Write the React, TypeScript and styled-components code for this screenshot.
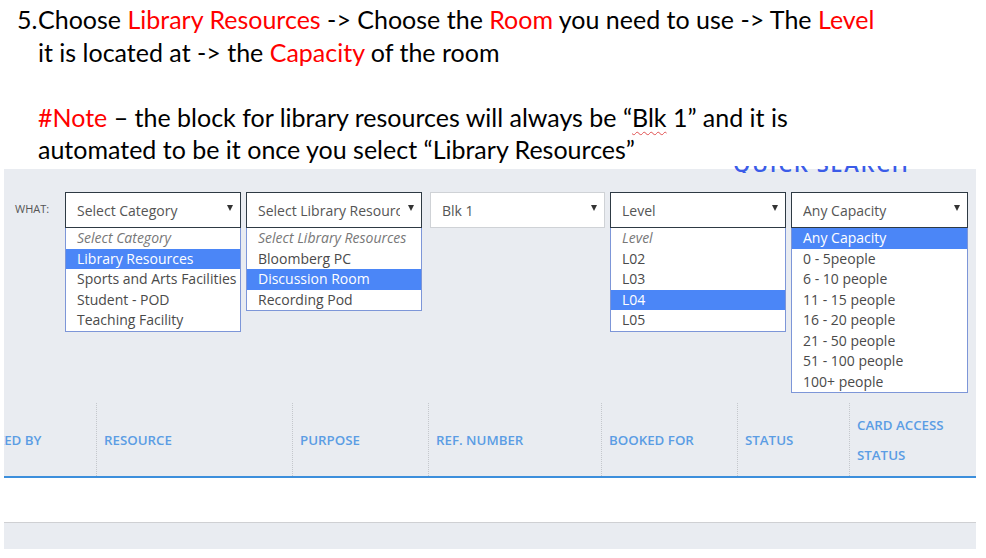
import React from "react";
import styled, { createGlobalStyle } from "styled-components";

const Global = createGlobalStyle`
  html, body { margin: 0; padding: 0; background: #ffffff; }
  body { width: 986px; height: 558px; overflow: hidden; }
`;

const Page = styled.div`
  width: 986px;
  height: 558px;
  background: #fff;
`;

const Instructions = styled.div`
  display: flex;
  height: 166px;
  box-sizing: border-box;
  padding: 3px 0 0 17px;
  font-family: Lato, "Liberation Sans", sans-serif;
  font-size: 25px;
  line-height: 32.5px;
  color: #000;
`;

const Marker = styled.span`
  flex: none;
  width: 21px;
`;

const Body = styled.div`
  white-space: nowrap;
`;

const Para = styled.p`
  margin: 0 0 32.5px;
  &:last-child { margin: 0; }
`;

const Red = styled.span`
  color: #ff0000;
`;

const Squiggle = styled.span`
  text-decoration: underline wavy #e05050;
  text-decoration-thickness: 1px;
  text-underline-offset: 4px;
`;

const Panel = styled.section`
  position: relative;
  margin-left: 4px;
  width: 972px;
  height: 383px;
  background: linear-gradient(to bottom, #ffffff 0 3px, #e9ecf1 3px);
  overflow: hidden;
  font-family: "Open Sans", "Noto Sans", sans-serif;
`;

const TitleClip = styled.div`
  height: 7px;
  overflow: hidden;
  padding-left: 729px;
`;

const Title = styled.h2`
  margin: -14px 0 0;
  font-size: 22px;
  line-height: 22px;
  font-weight: 600;
  letter-spacing: 1.6px;
  color: #3b5ce8;
  white-space: nowrap;
`;

const FilterRow = styled.div`
  display: flex;
  align-items: center;
  padding: 19px 0 0 11px;
`;

const Label = styled.span`
  width: 50px;
  font-size: 11px;
  color: #555;
  margin-top: -3px;
`;

const SelectWrap = styled.div<{ $w: number; $ml: number }>`
  position: relative;
  width: ${(p) => p.$w}px;
  margin-left: ${(p) => p.$ml}px;
`;

const SelectBox = styled.div<{ $active?: boolean }>`
  height: 36px;
  box-sizing: border-box;
  border: ${(p) => (p.$active ? "1.5px solid #2e3a44" : "1px solid #cfd2d6")};
  background: #fff;
  display: flex;
  align-items: center;
  padding: 1px 7px 0 11px;
  gap: 8px;
  font-size: 14px;
  color: #555;
`;

const Value = styled.span`
  flex: 1;
  overflow: hidden;
  white-space: nowrap;
`;

const Arrow = styled.span`
  flex: none;
  width: 0;
  height: 0;
  border-left: 3.5px solid transparent;
  border-right: 3.5px solid transparent;
  border-top: 6px solid #333;
  margin-top: -5px;
`;

const Menu = styled.ul`
  position: absolute;
  top: 100%;
  left: 0;
  right: 0;
  margin: 0;
  padding: 0;
  list-style: none;
  background: #fff;
  border: 1px solid #7d96d8;
  border-top-width: 0;
  z-index: 2;
`;

const Option = styled.li<{ $selected?: boolean; $placeholder?: boolean }>`
  height: 20.5px;
  line-height: 20.5px;
  padding-left: 11px;
  font-size: 14px;
  white-space: nowrap;
  overflow: hidden;
  color: ${(p) => (p.$selected ? "#fff" : p.$placeholder ? "#777" : "#4a4a4a")};
  background: ${(p) => (p.$selected ? "#4b86f7" : "transparent")};
  font-style: ${(p) => (p.$placeholder ? "italic" : "normal")};
`;

const Header = styled.div`
  display: grid;
  grid-template-columns: 92px 196px 136px 173px 136px 112px 1fr;
  height: 73px;
  margin-top: 175px;
  border-bottom: 2px solid #3c8fdc;
`;

const HeadCell = styled.div<{ $first?: boolean }>`
  display: flex;
  align-items: center;
  padding-left: ${(p) => (p.$first ? 0 : 7)}px;
  border-left: ${(p) => (p.$first ? "none" : "1px dotted #c4c7cc")};
  font-size: 13.3px;
  font-weight: 600;
  line-height: 30px;
  color: #5b9de4;
  overflow: hidden;
  white-space: nowrap;
`;

const CutText = styled.span`
  margin-left: -38px;
`;

const Row = styled.div`
  height: 44px;
  background: #fff;
  border-bottom: 1px solid #cfd0d3;
`;

type Sel = {
  w: number;
  ml: number;
  value: string;
  active?: boolean;
  options?: { label: string; selected?: boolean; placeholder?: boolean }[];
};

const selects: Sel[] = [
  {
    w: 176,
    ml: 0,
    value: "Select Category",
    active: true,
    options: [
      { label: "Select Category", placeholder: true },
      { label: "Library Resources", selected: true },
      { label: "Sports and Arts Facilities" },
      { label: "Student - POD" },
      { label: "Teaching Facility" },
    ],
  },
  {
    w: 176,
    ml: 5,
    value: "Select Library Resources",
    active: true,
    options: [
      { label: "Select Library Resources", placeholder: true },
      { label: "Bloomberg PC" },
      { label: "Discussion Room", selected: true },
      { label: "Recording Pod" },
    ],
  },
  { w: 175, ml: 8, value: "Blk 1" },
  {
    w: 176,
    ml: 5,
    value: "Level",
    active: true,
    options: [
      { label: "Level", placeholder: true },
      { label: "L02" },
      { label: "L03" },
      { label: "L04", selected: true },
      { label: "L05" },
    ],
  },
  {
    w: 177,
    ml: 5,
    value: "Any Capacity",
    active: true,
    options: [
      { label: "Any Capacity", selected: true },
      { label: "0 - 5people" },
      { label: "6 - 10 people" },
      { label: "11 - 15 people" },
      { label: "16 - 20 people" },
      { label: "21 - 50 people" },
      { label: "51 - 100 people" },
      { label: "100+ people" },
    ],
  },
];

export default function App() {
  return (
    <Page>
      <Global />
      <Instructions>
        <Marker>5.</Marker>
        <Body>
          <Para>
            Choose <Red>Library Resources</Red> -&gt; Choose the <Red>Room</Red> you need to use -&gt; The{" "}
            <Red>Level</Red>
            <br />
            it is located at -&gt; the <Red>Capacity</Red> of the room
          </Para>
          <Para>
            <Red>#Note</Red> – the block for library resources will always be “<Squiggle>Blk</Squiggle> 1” and it is
            <br />
            automated to be it once you select “Library Resources”
          </Para>
        </Body>
      </Instructions>
      <Panel>
        <TitleClip>
          <Title>QUICK SEARCH</Title>
        </TitleClip>
        <FilterRow>
          <Label>WHAT:</Label>
          {selects.map((s) => (
            <SelectWrap key={s.value} $w={s.w} $ml={s.ml}>
              <SelectBox $active={s.active}>
                <Value>{s.value}</Value>
                <Arrow />
              </SelectBox>
              {s.options && (
                <Menu>
                  {s.options.map((o) => (
                    <Option key={o.label} $selected={o.selected} $placeholder={o.placeholder}>
                      {o.label}
                    </Option>
                  ))}
                </Menu>
              )}
            </SelectWrap>
          ))}
        </FilterRow>
        <Header>
          <HeadCell $first>
            <CutText>BOOKED BY</CutText>
          </HeadCell>
          <HeadCell>RESOURCE</HeadCell>
          <HeadCell>PURPOSE</HeadCell>
          <HeadCell>REF. NUMBER</HeadCell>
          <HeadCell>BOOKED FOR</HeadCell>
          <HeadCell>STATUS</HeadCell>
          <HeadCell>
            CARD ACCESS
            <br />
            STATUS
          </HeadCell>
        </Header>
        <Row />
      </Panel>
    </Page>
  );
}
